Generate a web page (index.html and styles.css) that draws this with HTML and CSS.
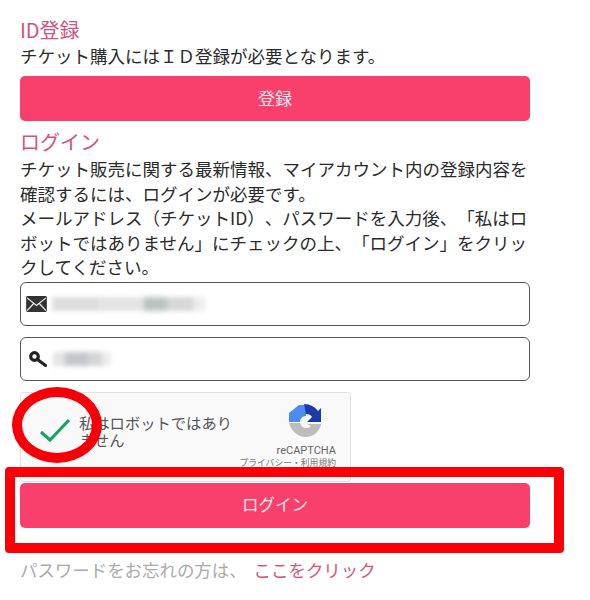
FILE: index.html
```html
<!DOCTYPE html>
<html lang="ja">
<head>
<meta charset="utf-8">
<title>ログイン</title>
<link rel="stylesheet" href="styles.css">
</head>
<body>
<main class="page">
  <h2 class="title first">ID登録</h2>
  <p class="text">チケット購入にはＩＤ登録が必要となります。</p>
  <button class="btn reg">登録</button>
  <h2 class="title second">ログイン</h2>
  <p class="text intro">チケット販売に関する最新情報、マイアカウント内の登録内容を<br>確認するには、ログインが必要です。<br>メールアドレス（チケットID）、パスワードを入力後、「私はロ<br>ボットではありません」にチェックの上、「ログイン」をクリッ<br>クしてください。</p>
  <div class="field mail">
    <svg class="ico" width="21" height="16" viewBox="0 0 22 17"><rect width="22" height="17" rx="1.5" fill="#333"/><path d="M1 2l10 8 10-8M1 15.5l7-7.5M21 15.5l-7-7.5" fill="none" stroke="#eee" stroke-width="1.3"/></svg>
    <span class="blur b1"></span>
  </div>
  <div class="field pass">
    <svg class="ico key" width="18" height="17" viewBox="0 0 18 17"><circle cx="5.5" cy="5.5" r="3.8" fill="none" stroke="#222" stroke-width="3.2"/><path d="M8.5 8.5l8 6" stroke="#222" stroke-width="3" stroke-linecap="round"/></svg>
    <span class="blur b2"></span>
  </div>
  <div class="captcha">
    <svg class="check" width="32" height="26" viewBox="0 0 32 26"><path d="M2 15l9 8L30 3" fill="none" stroke="#1e9e68" stroke-width="3.2"/></svg>
    <div class="cap-label">私はロボットではあり<br>ません</div>
    <div class="cap-brand">
      <svg width="34" height="34" viewBox="0 0 34 34">
        <path d="M10 1L0 9v9h11c0-3 2-6 6-6V1z" fill="#4a8cf0"/>
        <path d="M15 0c6 0 11 3 14 7l3-3v14H18l5-5c-1-2-3-3-6-3z" fill="#1c3aa9"/>
        <path d="M0 19h11c1 3 3 5 6 5 2 0 4-1 5-2l-4-2h14v1c-2 7-8 12-15 12C9 33 2 27 0 19z" fill="#bdbdbd"/>
      </svg>
      <span class="cap-name">reCAPTCHA</span>
      <span class="cap-links">プライバシー・利用規約</span>
    </div>
  </div>
  <button class="btn login">ログイン</button>
  <p class="forgot">パスワードをお忘れの方は、 <a class="link">ここをクリック</a></p>
</main>
<div class="ring"></div>
<div class="frame"></div>
</body>
</html>
```
FILE: styles.css
```css
html, body { margin: 0; padding: 0; background: #fff; }
body {
  width: 590px; height: 600px; overflow: hidden; position: relative;
  font-family: "Noto Sans CJK JP", "Noto Sans", sans-serif;
  text-spacing-trim: space-all;
}
.page { width: 510px; margin-left: 20px; padding-top: 19px; }
.title { margin: 0; font-size: 20px; line-height: 21px; padding-bottom: 4px; font-weight: 400; color: #d2527f; }
.second { margin-top: 9.5px; }
.text { margin: 0; font-size: 17.5px; line-height: 24.5px; color: #2a2a2a; }
.intro { margin-top: 1.5px; }
.btn {
  display: block; width: 510px; height: 45px; border: 0; border-radius: 5px;
  background: #f9406c; color: #fde8ee; font: inherit; font-size: 17px; padding: 0 0 3px;
}
.reg { margin-top: 7.5px; }
.field {
  box-sizing: border-box; height: 44px; border: 1px solid #555; border-radius: 6px;
  display: flex; align-items: center; padding-left: 5px; background: #fff;
}
.mail { margin-top: 2.5px; }
.pass { margin-top: 11px; }
.ico { flex: none; }
.key { margin-left: 3px; margin-right: 1px; }
.blur { display: block; height: 14px; margin-left: 5px; filter: blur(2.5px); }
.b1 { width: 154px; background: linear-gradient(90deg, #ddd 0 30%, #e4e4e4 30% 60%, #bfc2c2 60% 75%, #d8d8d8 75% 92%, #eee 92%); }
.b2 { width: 58px; background: linear-gradient(90deg, #e4e4e4 0 20%, #c4c6c8 20% 60%, #d4d4d4 60% 85%, #ececec 85%); }
.captcha {
  box-sizing: border-box; width: 331px; height: 90px; margin-top: 11px;
  background: #f9f9f9; border: 1px solid #e2e2e2; border-radius: 3px;
  display: flex; align-items: flex-start;
}
.check { flex: none; margin: 24px 0 0 18px; }
.cap-label { margin: 21px 0 0 8px; font-size: 15.3px; line-height: 17px; color: #555; width: 170px; white-space: nowrap; }
.cap-brand {
  margin-left: auto; width: 100px; padding-top: 11px; padding-right: 14px;
  display: flex; flex-direction: column; align-items: flex-end;
}
.cap-brand svg { margin-right: 13px; }
.cap-name { font-family: Roboto, sans-serif; font-size: 11px; line-height: 12px; margin-top: 7px; color: #666; }
.cap-links { font-size: 8.8px; line-height: 12px; margin-top: 0; color: #777; white-space: nowrap; }
.login { margin-top: 1px; font-size: 16.5px; }
.forgot { margin: 30px 0 0; font-size: 17.45px; line-height: 24px; color: #aaa; white-space: nowrap; }
.link { color: #cf5a72; margin-left: 3px; }
.ring {
  position: absolute; left: 12px; top: 387px; width: 90px; height: 76px;
  box-sizing: border-box; border: 10px solid #f40008; border-radius: 50%;
}
.frame {
  position: absolute; left: 5px; top: 467px; width: 559px; height: 86px;
  box-sizing: border-box; border: 10px solid #fb0007; border-radius: 4px;
}
```
